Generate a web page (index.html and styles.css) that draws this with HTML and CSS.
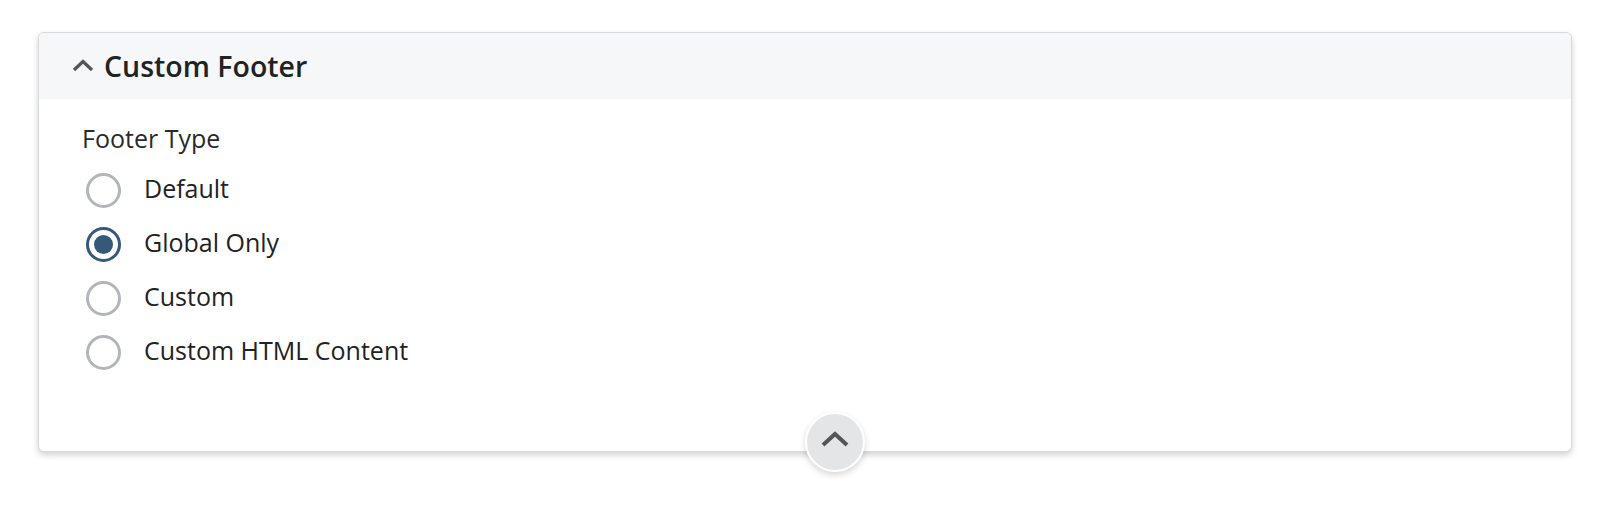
FILE: index.html
```html
<!DOCTYPE html>
<html lang='en'>
<head>
  <meta charset='UTF-8'>
  <title>Custom Footer</title>
  <link rel="stylesheet" href="styles.css">
</head>
<body>
  <div class='page'>
    <div class='panel'>
      <div class='panel-header'>
        <svg class='header-chevron' width='22' height='14' viewBox='0 0 22 14'>
          <path d='M2 12 L11 3.5 L20 12' fill='none' stroke='#555' stroke-width='3.2'/>
        </svg>
        <h2>Custom Footer</h2>
      </div>
      <div class='panel-body'>
        <p class='field-label'>Footer Type</p>
        <div class='radio-list'>
          <label class='radio-row'><span class='radio'></span><span class='radio-text'>Default</span></label>
          <label class='radio-row'><span class='radio checked'></span><span class='radio-text'>Global Only</span></label>
          <label class='radio-row'><span class='radio'></span><span class='radio-text'>Custom</span></label>
          <label class='radio-row'><span class='radio'></span><span class='radio-text'>Custom HTML Content</span></label>
        </div>
      </div>
      <button class='collapse-btn' type='button'>
        <svg width='28' height='16' viewBox='0 0 28 16'>
          <path d='M2 14 L14 3 L26 14' fill='none' stroke='#555' stroke-width='4'/>
        </svg>
      </button>
    </div>
  </div>
</body>
</html>
```

FILE: styles.css
```css
body {
  margin: 0;
  background: #fff;
  font-family: 'Open Sans', 'Noto Sans', sans-serif;
  color: #222;
}

.page {
  padding: 32px 38px;
}

.panel {
  position: relative;
  border: 1px solid #d6d9dd;
  border-radius: 6px;
  background: #fff;
  box-shadow: 0 3px 6px rgba(0, 0, 0, 0.18);
}

.panel-header {
  display: flex;
  align-items: center;
  gap: 10px;
  height: 66px;
  padding-left: 33px;
  background: #f6f7f9;
  border-radius: 5px 5px 0 0;
}

.panel-header h2 {
  margin: 0;
  font-size: 28.5px;
  font-weight: 600;
  color: #222;
}

.header-chevron {
  display: block;
  margin-top: -2px;
}

.panel-body {
  padding: 25px 43px 72px;
}

.field-label {
  margin: 0 0 11px 0;
  font-size: 25px;
  line-height: 28px;
  color: #2a2a2a;
}

.radio-row {
  display: flex;
  align-items: center;
  gap: 23px;
  height: 54px;
  font-size: 25px;
  color: #222;
  cursor: pointer;
}

.radio-text {
  margin-top: -4px;
}

.radio {
  position: relative;
  width: 29px;
  height: 29px;
  margin-left: 4px;
  border: 3px solid #b2b6ba;
  border-radius: 50%;
  background: #fff;
}

.radio.checked {
  border-color: #36597a;
}

.radio.checked::after {
  content: '';
  position: absolute;
  top: 5px;
  left: 5px;
  width: 19px;
  height: 19px;
  border-radius: 50%;
  background: #36597a;
}

.collapse-btn {
  position: absolute;
  left: 50%;
  bottom: -21px;
  display: flex;
  align-items: center;
  justify-content: center;
  width: 60px;
  height: 60px;
  padding: 0;
  border: 2px solid #fff;
  border-radius: 50%;
  background: #e4e5e7;
  box-shadow: 0 3px 6px rgba(0, 0, 0, 0.16);
  cursor: pointer;
}

.collapse-btn svg {
  display: block;
  margin-top: -6px;
}
```
